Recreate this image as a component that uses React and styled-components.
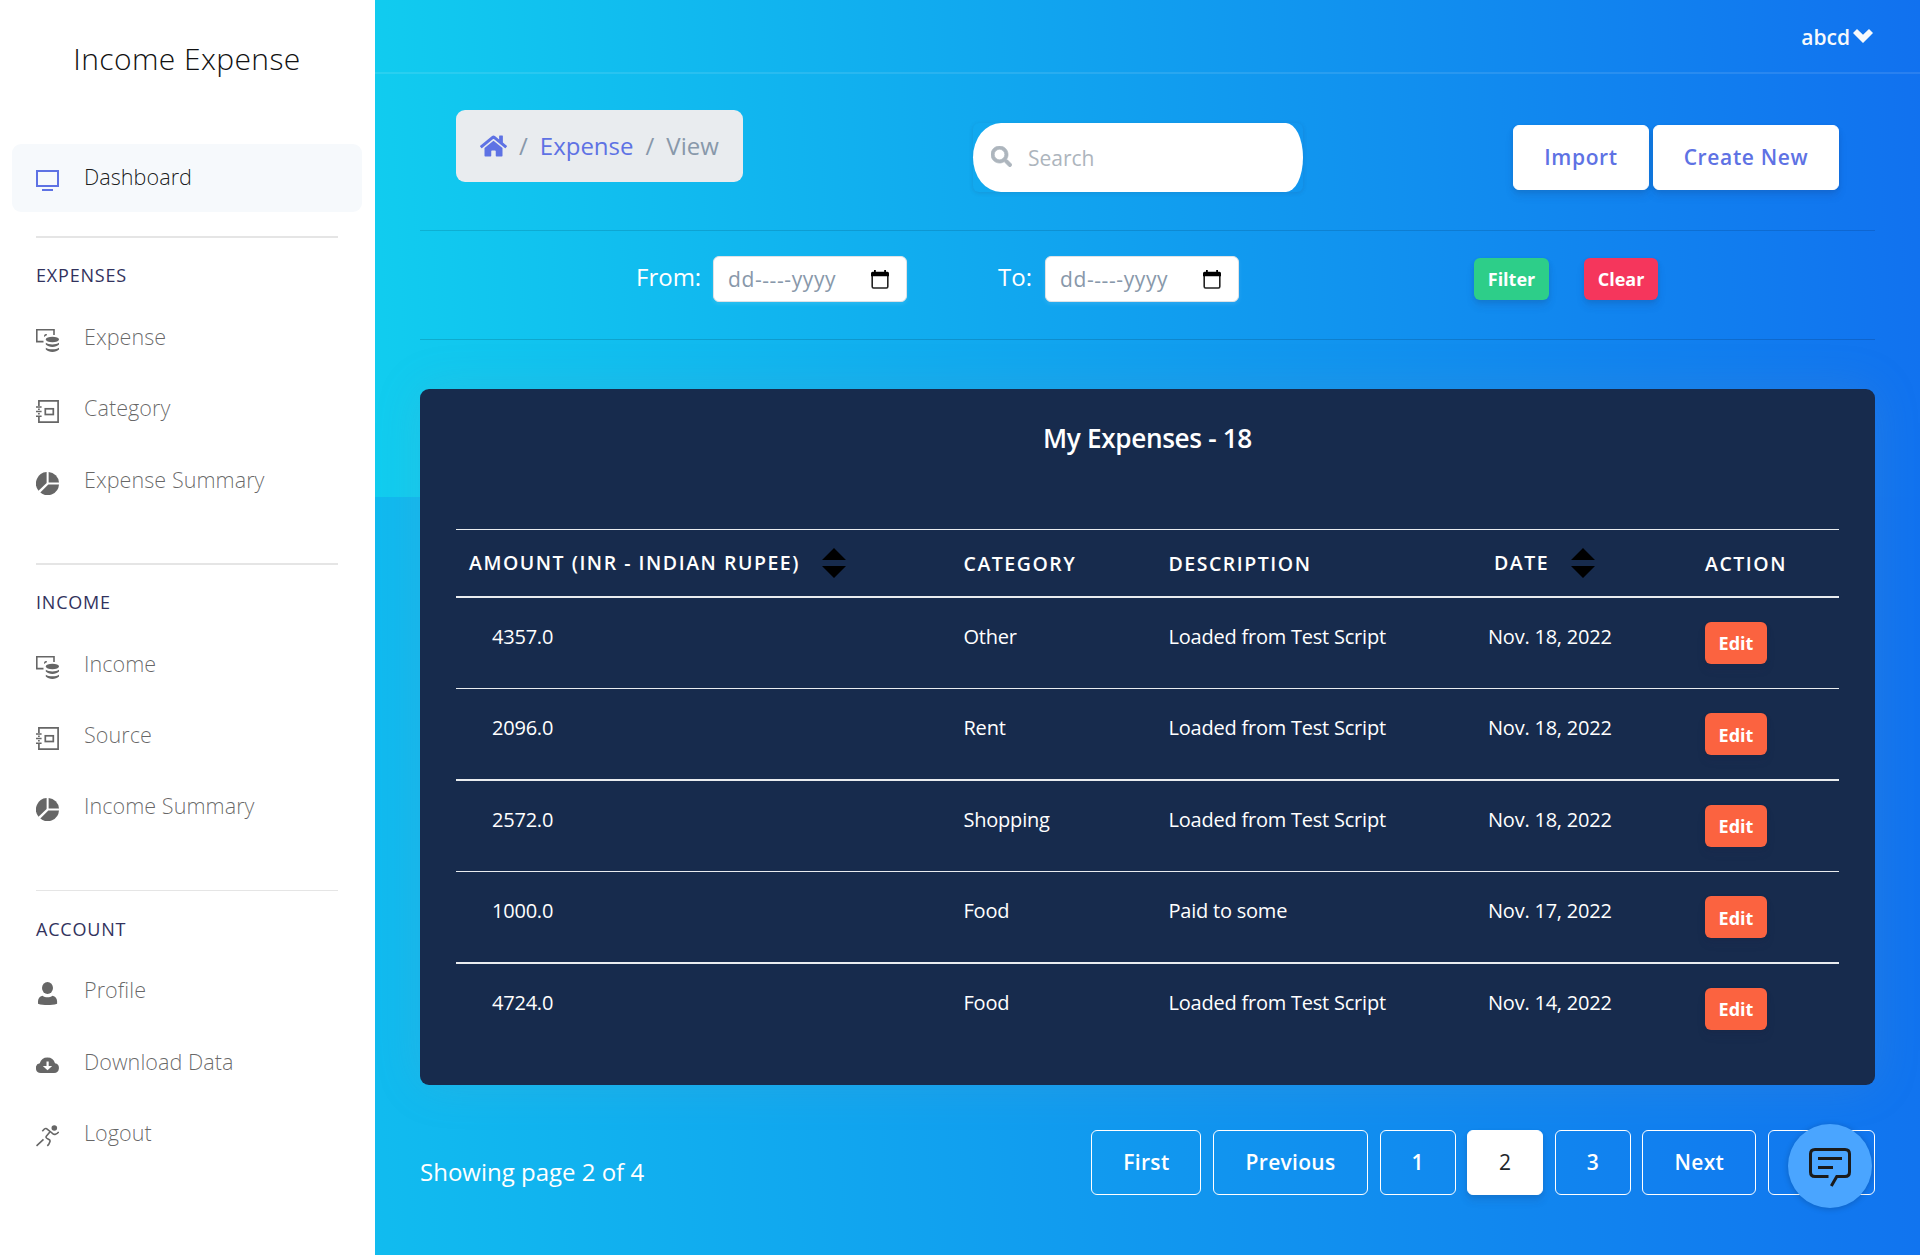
import React from "react";
import styled, { createGlobalStyle, css } from "styled-components";
import { FaHome, FaSearch } from "react-icons/fa";

const GlobalStyle = createGlobalStyle`
  *, *::before, *::after { box-sizing: border-box; }
  html, body { margin: 0; padding: 0; }
  body {
    font-family: "Open Sans", "Noto Sans", sans-serif;
    font-size: 24px;
    line-height: 1.5;
    overflow: hidden;
  }
  a { color: inherit; text-decoration: none; }
`;

const gradient = "linear-gradient(87deg, #11cdef 0%, #1171ef 100%)";
const buttonShadow = "0 6px 9px rgba(50, 50, 93, 0.11), 0 2px 5px rgba(0, 0, 0, 0.08)";

const Page = styled.div`
  display: flex;
  width: 1920px;
  height: 1255px;
  background: ${gradient};
`;

/* Sidebar */

const Sidebar = styled.nav`
  flex: none;
  width: 375px;
  height: 100%;
  background: #fff;
`;

const Brand = styled.a`
  display: block;
  height: 144px;
  padding: 36px 1px 0 0;
  text-align: center;
  font-size: 30px;
  line-height: 45px;
  font-weight: 340;
  letter-spacing: 0.4px;
  color: #111;
`;

const Divider = styled.hr`
  width: 302px;
  height: ${(p) => p.$thickness}px;
  margin: 0 0 0 36px;
  border: 0;
  background: #e5e5e5;
`;

const NavSection = styled.section`
  height: 326.6px;
`;

const FirstGroup = styled.div`
  height: 92.4px;
`;

const NavHeading = styled.h6`
  height: ${(p) => 67.7 - p.$thickness}px;
  margin: 0;
  padding: ${(p) => 26 - p.$thickness}px 36px 0;
  font-size: 18px;
  line-height: 27px;
  font-weight: 440;
  letter-spacing: 0.8px;
  text-transform: uppercase;
  color: #32325d;
`;

const NavLink = styled.a`
  display: flex;
  height: 68px;
  margin: 0 13px 3.35px 12px;
  padding: 0 24px;
  border-radius: 9px;
  font-size: 21.6px;
  line-height: 66.6px;
  font-weight: 330;
  letter-spacing: 0.03px;
  color: ${(p) => (p.$active ? "rgba(0,0,0,0.9)" : "rgba(0,0,0,0.6)")};
  background: ${(p) => (p.$active ? "#f6f9fc" : "transparent")};

  svg {
    flex: none;
    width: 23px;
    height: 23px;
    margin: 25px 25px 0 0;
    color: ${(p) => (p.$active ? "#5e72e4" : "#666")};
  }
`;

/* Main column */

const Main = styled.main`
  position: relative;
  flex: 1;
  height: 100%;
`;

const HeaderBand = styled.div`
  height: 497px;
  margin-bottom: -497px;
  background: ${gradient};
`;

const Content = styled.div`
  position: relative;
  display: flex;
  flex-direction: column;
  height: 100%;
`;

const TopBar = styled.header`
  display: flex;
  justify-content: flex-end;
  height: 74px;
  padding: 21px 47px 0 0;
  border-bottom: 2px solid rgba(255, 255, 255, 0.1);
`;

const UserMenu = styled.a`
  display: flex;
  height: 32px;
  font-size: 21px;
  line-height: 32px;
  font-weight: 600;
  color: #f6f9fc;

  svg {
    width: 20px;
    height: 14px;
    margin: 8px 0 0 3px;
  }
`;

const Toolbar = styled.div`
  display: flex;
  justify-content: space-between;
  align-items: flex-start;
  height: 157px;
  margin: 0 45px;
  padding: 36px 36px 0;
  border-bottom: 1px solid rgba(0, 0, 0, 0.12);
`;

const Breadcrumb = styled.ol`
  display: flex;
  align-items: center;
  gap: 12px;
  width: 287px;
  height: 72px;
  margin: 0;
  padding: 0 24px;
  border-radius: 9px;
  background: #e9ecef;
  font-size: 24px;
  color: #8898aa;
  list-style: none;
  white-space: nowrap;
`;

const Crumb = styled.li`
  display: flex;
  color: ${(p) => (p.$link ? "#5e72e4" : "inherit")};

  svg { width: 27px; height: 24px; }
`;

const SearchBox = styled.label`
  width: 330px;
  height: 69px;
  margin: 13px 0 0 20px;
  border-radius: 6px;
  box-shadow: 0 1px 4px rgba(50, 50, 93, 0.15);
`;

const SearchField = styled.span`
  display: flex;
  align-items: center;
  height: 100%;
  padding: 2px 18px 0;
  border-radius: 28px 17px 17px 28px / 34.5px;
  background: #fff;
  color: #adb5bd;
  font-size: 21px;

  svg { width: 21px; height: 21px; margin: -4px 16px 0 0; stroke: currentColor; stroke-width: 16; }
`;

const ButtonGroup = styled.div`
  display: flex;
  gap: 4px;
  margin-top: 15px;
`;

const LargeButton = styled.button`
  width: ${(p) => p.$w}px;
  height: 65px;
  padding: 0;
  border: 1px solid #fff;
  border-radius: 6px;
  font-family: inherit;
  font-size: 21px;
  line-height: 31px;
  font-weight: ${(p) => (p.$page ? 600 : 560)};
  letter-spacing: ${(p) => (p.$page ? "0.3px" : "0.65px")};
  color: #5e72e4;
  background: #fff;
  box-shadow: ${buttonShadow};
  ${(p) =>
    p.$page &&
    css`
      font-weight: ${p.$current ? 500 : 600};
      color: ${p.$current ? "#212529" : "#fff"};
      background: ${p.$current ? "#fff" : "transparent"};
      box-shadow: ${p.$current ? buttonShadow : "none"};
    `}
`;

const FilterBar = styled.form`
  display: flex;
  align-items: flex-start;
  height: 109px;
  margin: 0 45px;
  padding: 25px 0 0 216px;
  border-bottom: 1px solid rgba(0, 0, 0, 0.14);
`;

const DateGroup = styled.label`
  display: flex;
  width: ${(p) => p.$w}px;
  margin-right: ${(p) => p.$gap}px;
  justify-content: space-between;
  color: #fff;
  line-height: 42px;
`;

const DateField = styled.span`
  display: flex;
  align-items: flex-start;
  justify-content: space-between;
  width: 194px;
  height: 46px;
  padding: 0 17px 0 14px;
  border: 1px solid #dee2e6;
  border-radius: 6px;
  background: #fff;
  box-shadow: 0 2px 4px rgba(255, 255, 255, 0.12);
  font-size: 21px;
  line-height: 45px;
  letter-spacing: 0.6px;
  color: #8898aa;

  svg { width: 18px; height: 19px; margin-top: 13px; }
`;

const MonthPart = styled.span`
  position: relative;
  top: 1px;
`;

const SmallButton = styled.button`
  width: ${(p) => p.$w}px;
  height: 42px;
  margin: ${(p) => p.$m || "0"};
  padding: ${(p) => p.$drop || 0}px 0 0;
  border: 0;
  border-radius: 6px;
  font-family: inherit;
  font-size: 18px;
  line-height: 27px;
  font-weight: 680;
  color: #fff;
  background: ${(p) => p.$bg};
  box-shadow: ${buttonShadow};
`;

/* Table card */

const Card = styled.section`
  height: 696px;
  margin: 49px 45px 0;
  padding: 0 36px;
  border-radius: 9px;
  background: #172b4d;
  box-shadow: 0 0 48px rgba(136, 152, 170, 0.15);
  color: #fff;
`;

const CardTitle = styled.h3`
  height: 140px;
  margin: 0;
  padding-top: 30px;
  text-align: center;
  font-size: 26.2px;
  line-height: 38px;
  font-weight: 600;
  letter-spacing: -0.36px;
`;

const Row = styled.div`
  display: grid;
  grid-template-columns: 507.5px 205px 319.5px 217px 134px;
  height: ${(p) => (p.$head ? 67.2 : 91.5)}px;
  border-top: ${(p) => (p.$thick ? 2 : 1)}px solid #e9ecef;
`;

const HeadCell = styled.div`
  display: flex;
  padding: ${(p) => (p.$sort ? 19 : 20)}px 0 0 ${(p) => p.$inset || 0}px;
  font-size: 19.5px;
  line-height: 27px;
  font-weight: 600;
  letter-spacing: 1.52px;
  text-transform: uppercase;
  white-space: nowrap;

  svg { width: 24px; height: 30px; margin: -1px 0 0 ${(p) => p.$sort || 0}px; }
`;

const Cell = styled.div`
  padding-left: ${(p) => p.$inset || 0}px;
  padding-top: ${(p) => (p.$thick ? 23.6 : 24.6)}px;
  font-size: 20px;
  line-height: 29px;
  letter-spacing: -0.22px;
  white-space: nowrap;
`;

/* Footer */

const Footer = styled.footer`
  display: flex;
  justify-content: space-between;
  margin: 45px 45px 0;
  color: #fff;
`;

const PageInfo = styled.p`
  margin: 24px 0 0;
  line-height: 36px;
`;

const Pagination = styled.div`
  display: flex;
  gap: 11.6px;
`;

const ChatButton = styled.button`
  position: fixed;
  left: 1788px;
  top: 1124px;
  width: 84px;
  height: 84px;
  padding: 0;
  border: 0;
  border-radius: 50%;
  background: #4aa5ff;
  box-shadow: 0 1px 6px rgba(0, 0, 0, 0.2);

  svg { display: block; width: 84px; height: 84px; }
`;

const TvIcon = () => (
  <svg viewBox="0 0 23 23" fill="none" stroke="currentColor" strokeWidth="2">
    <rect x="1" y="2" width="21" height="15" />
    <path d="M6 21H17" />
  </svg>
);

const CoinsIcon = () => (
  <svg viewBox="0 0 23 23" fill="currentColor">
    <path d="M7.5 12.6H.8V.8H18V6" fill="none" stroke="currentColor" strokeWidth="1.6" />
    <path d="M11 5.2a2.2 2.2 0 0 0-3 1.6c0 .5.2.9.5 1.2.4-.8 1.3-1.3 2.5-1.7z" />
    <ellipse cx="16.4" cy="10.5" rx="6.6" ry="2.7" />
    <path d="M9.8 13.8c1.6 1.2 4 1.6 6.6 1.6s5-.4 6.6-1.6v1.8c-1.5 1.6-4 2.3-6.6 2.3s-5.1-.7-6.6-2.3z" />
    <path d="M9.8 18.7c1.6 1.2 4 1.6 6.6 1.6s5-.4 6.6-1.6v1.800c-1.600 1.600-4 2.500-6.600 2.500s-5.100-.9-6.600-2.500z" />
  </svg>
);

const NotebookIcon = () => (
  <svg viewBox="0 0 23 23" fill="none" stroke="currentColor" strokeWidth="1.7">
    <path d="M2.9 6V.9H22.1V22.1H2.9V17M2.9 8.5V10M2.9 13V14.5" />
    <path d="M0 7H5.6M0 11.5H5.6M0 16.3H5.6" strokeWidth="1.5" />
    <rect x="9.3" y="8.8" width="8" height="5.7" />
  </svg>
);

const PieIcon = () => (
  <svg viewBox="0 0 23 23" fill="currentColor">
    <path d="M10.6 0v11L2.5 18.7A11.5 11.5 0 0 1 10.6 0z" />
    <path d="M12.6 0A11.5 11.5 0 0 1 23 10.5H12.6z" />
    <path d="M23 12.5A11.5 11.5 0 0 1 4.3 20.600L12.300 12.500z" />
  </svg>
);

const PersonIcon = () => (
  <svg viewBox="0 0 23 23" fill="currentColor">
    <ellipse cx="11.5" cy="6" rx="5.5" ry="6" />
    <path d="M6.5 13.7C8 14.7 9.7 15.2 11.5 15.2s3.5-.5 5-1.5c3 .7 4.6 3 4.6 5.5v2.5C18 22.7 15 23 11.5 23S5 22.700 2 21.700v-2.500c0-2.500 1.500-4.800 4.500-5.500z" />
  </svg>
);

const CloudIcon = () => (
  <svg viewBox="0 0 23 23" fill="currentColor" fillRule="evenodd">
    <path d="M4.9 19A4.9 4.9 0 0 1 3.8 9.3 7.9 7.9 0 0 1 19 9.300 4.900 4.900 0 0 1 18.100 19zM10.500 7.500V12H6.800L11.500 16.200 16.200 12H12.700V7.500z" />
  </svg>
);

const RunnerIcon = () => (
  <svg viewBox="0 0 23 23" fill="none" stroke="currentColor" strokeWidth="1.6">
    <circle cx="18.3" cy="3" r="2.8" fill="currentColor" stroke="none" />
    <path d="M6.3 6.3L8.4 4C9.2 3.3 10 3.3 10.8 3.8L14.3 6.500 17 8.800C17.800 9.500 18.500 9.600 19.500 9.200 21 8.700 22 8 22.700 6.800" />
    <path d="M14.300 6.500L10.500 11C9.700 12 10 12.800 11 13.400L13.300 14.700C14.200 15.300 14.200 16 13.800 16.900 13.300 18.500 12.500 19.800 11.300 20.800M7.500 14.300L.5 20.800" />
  </svg>
);

const ChevronIcon = () => (
  <svg viewBox="0 0 20 14" fill="currentColor">
    <path d="M0 4L4 0L10 5.800L16 0L20 4L10 14z" />
  </svg>
);

const CalendarIcon = () => (
  <svg viewBox="0 0 18 19">
    <path d="M1.200 5V16.500Q1.200 18 2.500 18H15.500Q16.800 18 16.800 16.500V5" fill="none" stroke="#222" strokeWidth="1.600" />
    <path d="M0 6.200V3.500Q0 1.800 1.500 1.800H3V0H4.800V1.800H13.200V0H15V1.800H16.500Q18 1.800 18 3.500V6.200z" />
  </svg>
);

const SortIcon = () => (
  <svg viewBox="0 0 24 30">
    <path d="M12 0L24 12H0zM0 18H24L12 30z" />
  </svg>
);

const ChatIcon = () => (
  <svg viewBox="0 0 84 84" fill="none" stroke="#1b1b1b" strokeWidth="3">
    <path d="M40.500 52.500H27Q22.500 52.500 22.500 48V30Q22.500 25.500 27 25.500H57Q61.500 25.500 61.500 30V48Q61.500 52.500 57 52.500H48.800L43.300 62" />
    <path d="M30 34.500H54M30 43.500H45" />
  </svg>
);

const sections = [
  ["Expenses", 2, [[CoinsIcon, "Expense"], [NotebookIcon, "Category"], [PieIcon, "Expense Summary"]]],
  ["Income", 2, [[CoinsIcon, "Income"], [NotebookIcon, "Source"], [PieIcon, "Income Summary"]]],
  ["Account", 1, [[PersonIcon, "Profile"], [CloudIcon, "Download Data"], [RunnerIcon, "Logout"]]],
];

const expenses = [
  ["4357.0", "Other", "Loaded from Test Script", "Nov. 18, 2022"],
  ["2096.0", "Rent", "Loaded from Test Script", "Nov. 18, 2022"],
  ["2572.0", "Shopping", "Loaded from Test Script", "Nov. 18, 2022"],
  ["1000.0", "Food", "Paid to some", "Nov. 17, 2022"],
  ["4724.0", "Food", "Loaded from Test Script", "Nov. 14, 2022"],
];

const pages = [["First", 110], ["Previous", 155], ["1", 76], ["2", 76], ["3", 76], ["Next", 114], ["Last", 107]];

const DateInput = () => (
  <DateField>
    <span>dd-<MonthPart>---</MonthPart>-yyyy</span>
    <CalendarIcon />
  </DateField>
);

export default function App() {
  return (
    <>
      <GlobalStyle />
      <Page>
        <Sidebar>
          <Brand href="#">Income Expense</Brand>
          <FirstGroup>
            <NavLink href="#" $active><TvIcon />Dashboard</NavLink>
          </FirstGroup>
          {sections.map(([title, thickness, links]) => (
            <NavSection key={title}>
              <Divider $thickness={thickness} />
              <NavHeading $thickness={thickness}>{title}</NavHeading>
              {links.map(([Icon, label]) => (
                <NavLink href="#" key={label}><Icon />{label}</NavLink>
              ))}
            </NavSection>
          ))}
        </Sidebar>
        <Main>
          <HeaderBand />
          <Content>
            <TopBar>
              <UserMenu href="#">abcd<ChevronIcon /></UserMenu>
            </TopBar>
            <Toolbar>
              <Breadcrumb>
                <Crumb $link><FaHome /></Crumb>
                <li>/</li>
                <Crumb $link>Expense</Crumb>
                <li>/</li>
                <Crumb>View</Crumb>
              </Breadcrumb>
              <SearchBox>
                <SearchField><FaSearch />Search</SearchField>
              </SearchBox>
              <ButtonGroup>
                <LargeButton $w={136}>Import</LargeButton>
                <LargeButton $w={186}>Create New</LargeButton>
              </ButtonGroup>
            </Toolbar>
            <FilterBar>
              <DateGroup $w={271} $gap={91}>From:<DateInput /></DateGroup>
              <DateGroup $w={241} $gap={235}>To:<DateInput /></DateGroup>
              <SmallButton type="button" $w={75} $bg="#2dce89" $m="2px 35px 0 0">Filter</SmallButton>
              <SmallButton type="button" $w={74} $bg="#f5365c" $m="2px 0 0">Clear</SmallButton>
            </FilterBar>
            <Card>
              <CardTitle>My Expenses - 18</CardTitle>
              <Row $head>
                <HeadCell $inset={13} $sort={22}>Amount (INR - Indian Rupee)<SortIcon /></HeadCell>
                <HeadCell>Category</HeadCell>
                <HeadCell>Description</HeadCell>
                <HeadCell $inset={6} $sort={22}>Date<SortIcon /></HeadCell>
                <HeadCell>Action</HeadCell>
              </Row>
              {expenses.map(([amount, category, description, date], i) => {
                const thick = i % 2 === 0;
                return (
                  <Row key={i} $thick={thick}>
                    <Cell $thick={thick} $inset={36}>{amount}</Cell>
                    <Cell $thick={thick}>{category}</Cell>
                    <Cell $thick={thick}>{description}</Cell>
                    <Cell $thick={thick}>{date}</Cell>
                    <Cell $thick={thick}><SmallButton $w={62} $drop={2} $bg="#fb6340">Edit</SmallButton></Cell>
                  </Row>
                );
              })}
            </Card>
            <Footer>
              <PageInfo>Showing page 2 of 4</PageInfo>
              <Pagination>
                {pages.map(([label, w]) => (
                  <LargeButton key={label} $page $w={w} $current={label === "2"}>{label}</LargeButton>
                ))}
              </Pagination>
            </Footer>
          </Content>
          <ChatButton aria-label="Chat"><ChatIcon /></ChatButton>
        </Main>
      </Page>
    </>
  );
}
